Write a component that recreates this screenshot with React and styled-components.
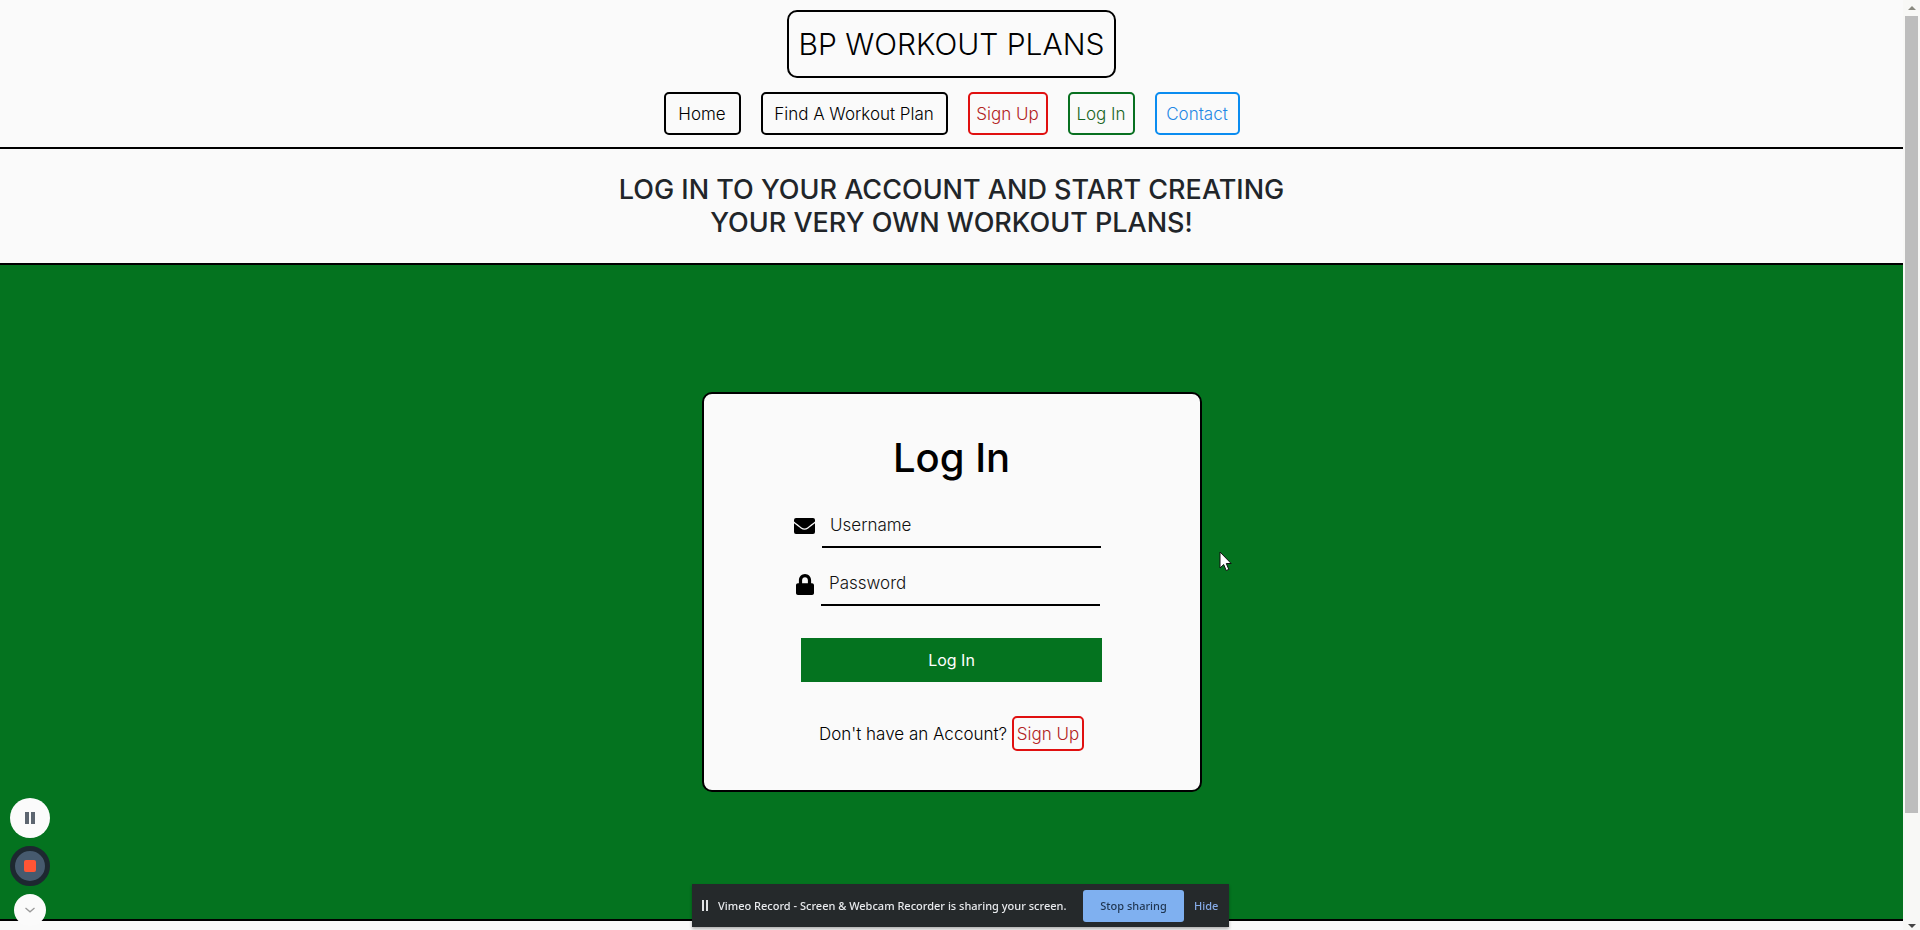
import React from "react";
import styled, { createGlobalStyle } from "styled-components";

const GlobalStyle = createGlobalStyle`
  *, *::before, *::after { box-sizing: border-box; }
  body {
    margin: 0;
    font-family: Inter, "Open Sans", sans-serif;
    font-size: 17px;
    font-weight: 300;
    color: #000;
    background: #fafafa;
  }
  h1, h2, p { margin: 0; }
  a { text-decoration: none; color: inherit; }
`;

const Shell = styled.div`
  display: flex;
  height: 100vh;
  overflow: hidden;
`;

const Page = styled.div`
  flex: 1;
  min-width: 0;
`;

const Header = styled.header`
  display: flex;
  flex-direction: column;
  align-items: center;
  gap: 14px;
  padding: 10px 0 12px;
  border-bottom: 2px solid #000;
`;

const Brand = styled.a`
  display: flex;
  align-items: center;
  justify-content: center;
  width: 329px;
  height: 68px;
  border: 2px solid #000;
  border-radius: 10px;
  font-size: 30px;
  white-space: nowrap;
`;

const Nav = styled.nav`
  display: flex;
  gap: 20px;
`;

const NavLink = styled.a`
  display: flex;
  align-items: center;
  justify-content: center;
  width: ${(p) => p.$width}px;
  height: 43px;
  border: 2px solid ${(p) => p.$border};
  border-radius: 5px;
  color: ${(p) => p.$color};
  white-space: nowrap;
`;

const Banner = styled.section`
  display: flex;
  justify-content: center;
  padding: 24px 0;
  border-bottom: 2px solid #000;
`;

const BannerTitle = styled.h2`
  width: 700px;
  font-size: 27px;
  font-weight: 500;
  line-height: 33px;
  text-align: center;
  color: #212529;
`;

const Main = styled.main`
  display: flex;
  justify-content: center;
  padding: 127px 0;
  background: #04731f;
`;

const Card = styled.form`
  display: flex;
  flex-direction: column;
  align-items: center;
  width: 500px;
  height: 400px;
  padding-top: 40px;
  border: 2px solid #000;
  border-radius: 10px;
  background: #fafafa;
`;

const CardTitle = styled.h1`
  font-size: 40px;
  font-weight: 500;
  line-height: 48px;
`;

const Field = styled.div`
  display: flex;
  align-items: center;
  gap: ${(p) => p.$gap}px;
  width: 315px;
  height: 44px;
  margin-top: ${(p) => p.$top}px;
`;

const FieldLabel = styled.label`
  display: flex;
  justify-content: center;
  width: 21px;
`;

const TextInput = styled.input`
  width: 279px;
  height: 44px;
  padding: 0 8px;
  border: 0;
  border-bottom: 2px solid #000;
  background: transparent;
  font: inherit;
  outline: none;
  &::placeholder { color: #111; opacity: 1; }
`;

const Submit = styled.button`
  width: 301px;
  height: 44px;
  margin-top: 32px;
  padding: 0;
  border: 0;
  background: #04731f;
  color: #fff;
  font: inherit;
  font-size: 16px;
  font-weight: 400;
`;

const Prompt = styled.p`
  display: flex;
  align-items: center;
  gap: 5px;
  margin-top: 34px;
  white-space: nowrap;
`;

const SignUpLink = styled.a`
  display: flex;
  align-items: center;
  justify-content: center;
  width: 72px;
  height: 35px;
  border: 2px solid #e01010;
  border-radius: 5px;
  color: #b22222;
`;

const Footer = styled.footer`
  height: 40px;
  border-top: 2px solid #000;
`;

const ScrollTrack = styled.div`
  display: flex;
  flex-direction: column;
  align-items: center;
  justify-content: space-between;
  width: 17px;
  padding: 6px 0 2px;
  background: #f8f8f6;
`;

const ScrollThumb = styled.div`
  width: 13px;
  height: calc(86% + 4px);
  margin: 6px 0 auto;
  background: #bdbdbd;
`;

const Recorder = styled.div`
  position: fixed;
  left: 10px;
  bottom: 4px;
  display: flex;
  flex-direction: column;
  align-items: center;
  gap: 8px;
`;

const RoundButton = styled.button`
  display: flex;
  align-items: center;
  justify-content: center;
  width: ${(p) => p.$size}px;
  height: ${(p) => p.$size}px;
  padding: 0;
  border: ${(p) => (p.$dark ? "5px solid #1d2830" : "0")};
  border-radius: 50%;
  background: ${(p) => (p.$dark ? "#465a6e" : "#fbfbfb")};
`;

const ShareBar = styled.aside`
  position: fixed;
  left: 692px;
  bottom: 3px;
  display: flex;
  align-items: center;
  width: 537px;
  height: 43px;
  padding-left: 10px;
  background: #25292b;
  box-shadow: 0 2px 3px rgba(0, 0, 0, 0.3);
  color: #e8eaed;
  font-family: "Noto Sans", sans-serif;
  font-size: 11px;
  font-weight: 500;
  white-space: nowrap;
`;

const ShareText = styled.span`
  width: 365px;
  margin-left: 10px;
`;

const StopButton = styled.button`
  width: 101px;
  height: 32px;
  padding: 0;
  border: 0;
  border-radius: 3px;
  background: #7fb0f0;
  color: #1f3550;
  font: inherit;
`;

const HideButton = styled.button`
  margin-left: 10px;
  padding: 0;
  border: 0;
  background: none;
  color: #86abe8;
  font: inherit;
`;

const Pointer = styled.svg`
  position: fixed;
  left: 1219px;
  top: 551px;
`;

const links = [
  { text: "Home", width: 77, color: "#000", border: "#000" },
  { text: "Find A Workout Plan", width: 187, color: "#000", border: "#000" },
  { text: "Sign Up", width: 80, color: "#b22222", border: "#e01010" },
  { text: "Log In", width: 67, color: "#17651f", border: "#087020" },
  { text: "Contact", width: 85, color: "#1e88e5", border: "#0a8cf0" },
];

export default function App() {
  return (
    <>
      <GlobalStyle />
      <Shell>
        <Page>
          <Header>
            <Brand href="#">BP WORKOUT PLANS</Brand>
            <Nav>
              {links.map((l) => (
                <NavLink key={l.text} href="#" $width={l.width} $color={l.color} $border={l.border}>
                  {l.text}
                </NavLink>
              ))}
            </Nav>
          </Header>
          <Banner>
            <BannerTitle>
              LOG IN TO YOUR ACCOUNT AND START CREATING
              <br />
              YOUR VERY OWN WORKOUT PLANS!
            </BannerTitle>
          </Banner>
          <Main>
            <Card onSubmit={(e) => e.preventDefault()}>
              <CardTitle>Log In</CardTitle>
              <Field $top={22} $gap={7}>
                <FieldLabel htmlFor="username" aria-label="Username">
                  <svg width="21" height="16" viewBox="0 0 21 16">
                    <path d="M2 0h17q2 0 2 2v1.6c-2 1.6-6 4.7-7.6 5.8-2 1.500-3.800 1.500-5.800 0C6 8.300 2 5.200 0 3.600V2Q0 0 2 0Z" />
                    <path d="M0 5.200c2 1.600 5.200 4 6.800 5.200 2.500 1.900 4.900 1.900 7.400 0 1.600-1.200 4.800-3.600 6.800-5.200V14q0 2-2 2H2q-2 0-2-2Z" />
                  </svg>
                </FieldLabel>
                <TextInput id="username" type="text" placeholder="Username" />
              </Field>
              <Field $top={14} $gap={6}>
                <FieldLabel htmlFor="password" aria-label="Password">
                  <svg width="18" height="21" viewBox="0 0 448 512" preserveAspectRatio="none">
                    <path d="M400 224h-24v-72C376 68.200 307.800 0 224 0S72 68.200 72 152v72H48c-26.500 0-48 21.500-48 48v192c0 26.500 21.500 48 48 48h352c26.500 0 48-21.500 48-48V272c0-26.500-21.500-48-48-48zm-104 0H152v-72c0-39.700 32.300-72 72-72s72 32.300 72 72v72z" />
                  </svg>
                </FieldLabel>
                <TextInput id="password" type="password" placeholder="Password" />
              </Field>
              <Submit type="submit">Log In</Submit>
              <Prompt>
                Don't have an Account?
                <SignUpLink href="#">Sign Up</SignUpLink>
              </Prompt>
            </Card>
          </Main>
          <Footer />
        </Page>
        <ScrollTrack>
          <svg width="8" height="4" viewBox="0 0 8 4">
            <path d="M0 4L4 0L8 4Z" fill="#8a8a80" />
          </svg>
          <ScrollThumb />
          <svg width="8" height="4" viewBox="0 0 8 4">
            <path d="M0 0L4 4L8 0Z" fill="#454545" />
          </svg>
        </ScrollTrack>
      </Shell>

      <Recorder>
        <RoundButton $size={40} aria-label="Pause">
          <svg width="10" height="12" viewBox="0 0 10 12">
            <path d="M0 0h4v12H0ZM6 0h4v12H6Z" fill="#5d6670" />
          </svg>
        </RoundButton>
        <RoundButton $size={40} $dark aria-label="Stop recording">
          <svg width="12" height="12" viewBox="0 0 12 12">
            <rect width="12" height="12" rx="2" fill="#ff5535" />
          </svg>
        </RoundButton>
        <RoundButton $size={32} aria-label="Collapse">
          <svg width="10" height="6" viewBox="0 0 10 6">
            <path d="M0.500 1L5 4.800L9.500 1" fill="none" stroke="#9a9a9a" strokeWidth="1.300" />
          </svg>
        </RoundButton>
      </Recorder>

      <ShareBar>
        <svg width="6" height="11" viewBox="0 0 6 11">
          <path d="M0 0h2v11H0ZM4 0h2v11H4Z" fill="#e0e2e4" />
        </svg>
        <ShareText>Vimeo Record - Screen &amp; Webcam Recorder is sharing your screen.</ShareText>
        <StopButton>Stop sharing</StopButton>
        <HideButton>Hide</HideButton>
      </ShareBar>

      <Pointer width="13" height="21" viewBox="0 0 13 21" aria-hidden="true">
        <path d="M1 1V17L4.700 13.500L7.200 19.500L9.800 18.400L7.300 12.500H12.200Z" fill="#fff" stroke="#111" />
      </Pointer>
    </>
  );
}
